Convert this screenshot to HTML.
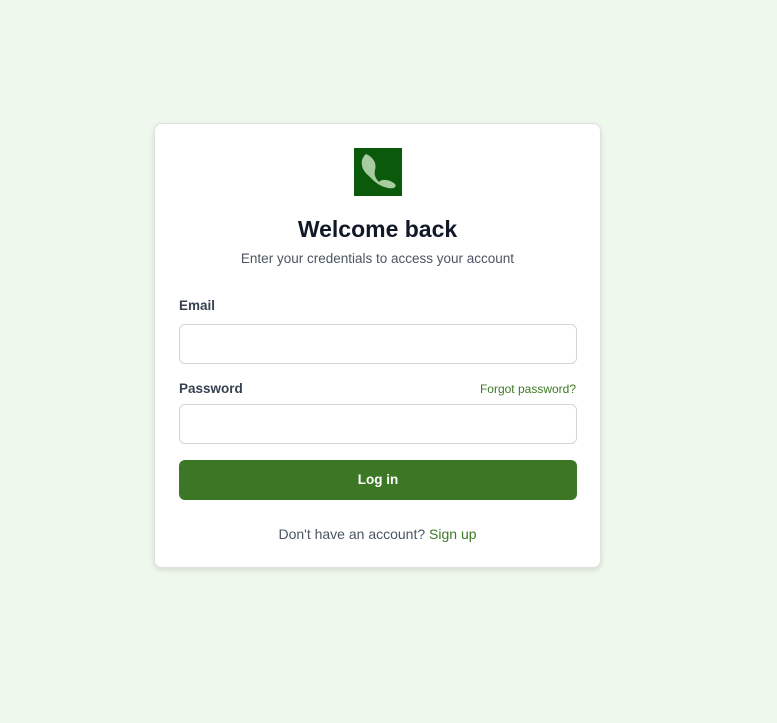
<!DOCTYPE html>
<html><head><style>
body{margin:0;width:777px;height:723px;background:#eff8ec;font-family:"Liberation Sans",sans-serif;position:relative}
.card{position:absolute;left:154px;top:123px;width:447px;height:445px;background:#fff;border:1px solid #dfe3de;border-radius:8px;box-shadow:0 2px 6px rgba(0,0,0,.12);box-sizing:border-box}
.logo{position:absolute;left:199px;top:24px;width:48px;height:48px;background:#0b5a0b}
h1{position:absolute;left:0;right:0;top:92px;margin:0;text-align:center;font-size:23px;color:#111827;font-weight:bold}
.sub{position:absolute;left:0;right:0;top:127px;text-align:center;font-size:13.5px;color:#4b5563}
.lbl{position:absolute;left:24px;font-size:13.5px;font-weight:bold;color:#374151}
.inp{position:absolute;left:24px;width:398px;height:40px;border:1px solid #d1d5db;border-radius:6px;box-sizing:border-box}
.fp{position:absolute;right:24px;top:258px;font-size:12px;color:#3d7a25}
.btn{position:absolute;left:24px;top:336px;width:398px;height:40px;background:#3c7726;border-radius:6px;color:#fff;font-weight:bold;font-size:13.5px;text-align:center;line-height:40px}
.foot{position:absolute;left:0;right:0;top:402px;text-align:center;font-size:14px;color:#4b5563}
.foot span{color:#3d7a25}
</style></head><body>
<div class="card">
<div class="logo"><svg width="48" height="48"><path d="M12 6 C5 12 7 22 15 28 C19 32 24 38 34 40 C40 41 43 39 41 36 C37 32 28 30 25 34 C21 30 20 26 21 22 C23 15 19 9 12 6Z" fill="#b8d8b0" opacity=".9"/></svg></div>
<h1>Welcome back</h1>
<div class="sub">Enter your credentials to access your account</div>
<div class="lbl" style="top:174px">Email</div>
<div class="inp" style="top:200px"></div>
<div class="lbl" style="top:257px">Password</div>
<div class="fp">Forgot password?</div>
<div class="inp" style="top:280px"></div>
<div class="btn">Log in</div>
<div class="foot">Don't have an account? <span>Sign up</span></div>
</div>
</body></html>
